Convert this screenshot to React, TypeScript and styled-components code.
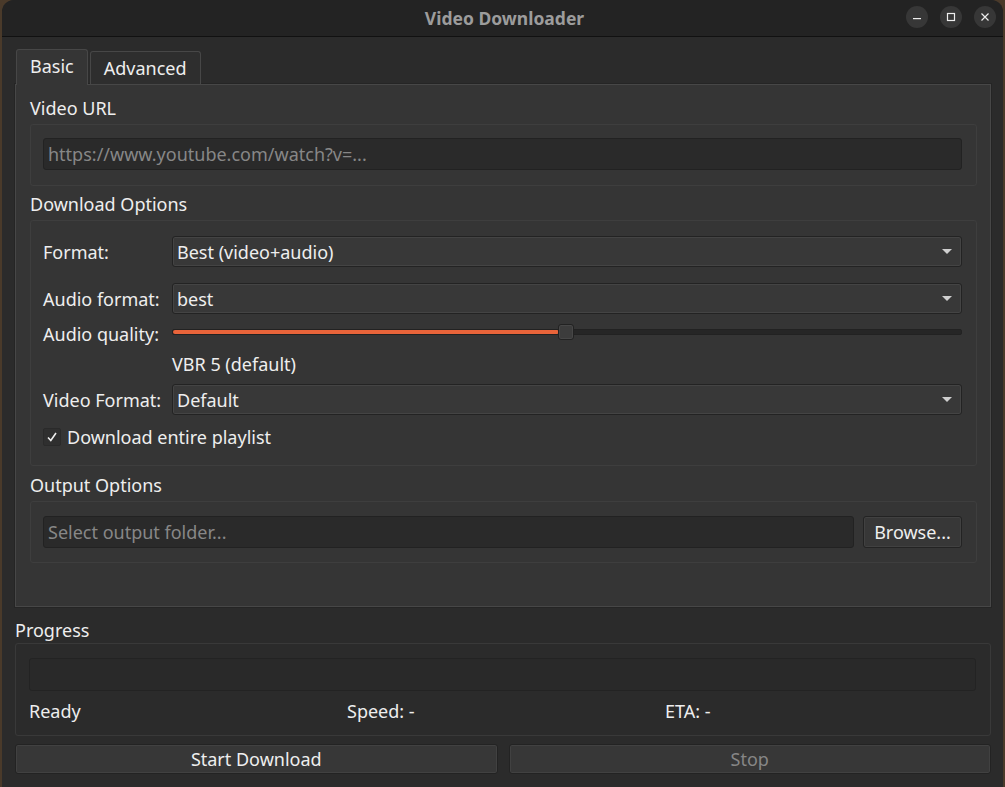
import React from "react";
import styled, { createGlobalStyle } from "styled-components";

const Global = createGlobalStyle`
  html, body { margin: 0; padding: 0; background: #4a3a2a; }
  body { font-family: "Noto Sans", "DejaVu Sans", sans-serif; }
  * { box-sizing: border-box; }
`;

const Window = styled.div`
  width: 1001px;
  height: 787px;
  margin: 0 2px;
  background: #2b2b2b;
  border-top-left-radius: 12px;
  border-top-right-radius: 12px;
  overflow: hidden;
  display: flex;
  flex-direction: column;
  color: #eeeeee;
  font-size: 18px;
`;

const TitleBar = styled.div`
  height: 37px;
  flex: none;
  background: #232323;
  border-bottom: 1px solid #111;
  display: flex;
  align-items: center;
  justify-content: center;
  position: relative;
`;

const Title = styled.div`
  font-weight: bold;
  color: #9c9c9c;
  font-size: 17.5px;
  margin-left: 4px;
`;

const Controls = styled.div`
  position: absolute;
  right: 7px;
  top: 6px;
  display: flex;
  gap: 12px;
`;

const CtrlBtn = styled.div`
  width: 22px;
  height: 22px;
  border-radius: 50%;
  background: #373737;
  display: flex;
  align-items: center;
  justify-content: center;
`;

const Body = styled.div`
  padding: 12px 12px 0 13px;
  display: flex;
  flex-direction: column;
`;

const TabBar = styled.div`
  display: flex;
  align-items: flex-end;
  gap: 2px;
  height: 35px;
  padding-left: 1px;
`;

const Tab = styled.div<{ $active?: boolean }>`
  height: ${(p) => (p.$active ? "36px" : "33px")};
  padding: 0 13px;
  display: flex;
  align-items: center;
  background: ${(p) => (p.$active ? "#353535" : "#2e2e2e")};
  border: 1px solid #474747;
  border-bottom: none;
  border-radius: 3px 3px 0 0;
  margin-bottom: ${(p) => (p.$active ? "-1px" : "0")};
  position: relative;
  z-index: ${(p) => (p.$active ? 1 : 0)};
  color: #eeeeee;
  padding-bottom: ${(p) => (p.$active ? "4px" : "0")};
`;

const Pane = styled.div`
  height: 523px;
  background: #353535;
  border: 1px solid #474747;
  box-shadow: 0 0 0 1px #252525;
  padding: 12px 13px 0 14px;
  display: flex;
  flex-direction: column;
`;

const SectionTitle = styled.div<{ $mt?: number; $mb?: number }>`
  height: 22px;
  line-height: 22px;
  margin-top: ${(p) => p.$mt ?? 0}px;
  margin-bottom: ${(p) => p.$mb ?? 5}px;
`;

const Group = styled.div<{ $h: number; $pt: number }>`
  height: ${(p) => p.$h}px;
  border: 1px solid #3e3e3e;
  border-radius: 3px;
  padding: ${(p) => p.$pt}px 14px 0 12px;
  display: flex;
  flex-direction: column;
`;

const TextInput = styled.div<{ $placeholder?: boolean }>`
  height: 32px;
  flex: none;
  background: #2a2a2a;
  border: 1px solid #222;
  border-radius: 3px;
  display: flex;
  align-items: center;
  padding-left: 4px;
  color: ${(p) => (p.$placeholder ? "#878787" : "#eee")};
`;

const GrowInput = styled(TextInput)`
  flex: 1;
`;

const FormRow = styled.div<{ $mt?: number; $h?: number }>`
  display: grid;
  grid-template-columns: 129px 1fr;
  align-items: center;
  margin-top: ${(p) => p.$mt ?? 0}px;
  height: ${(p) => p.$h ?? 31}px;
`;

const Combo = styled.div`
  height: 31px;
  background: #383838;
  border: 1px solid #232323;
  box-shadow: inset 0 0 0 1px #444;
  border-radius: 3px;
  display: flex;
  align-items: center;
  justify-content: space-between;
  padding: 0 9px 0 4px;
`;

const Arrow = styled.div`
  width: 0;
  height: 0;
  border-left: 5px solid transparent;
  border-right: 5px solid transparent;
  border-top: 5px solid #cfcfcf;
`;

const SliderTrack = styled.div`
  position: relative;
  height: 6px;
  margin-bottom: 5px;
  background: #262626;
  border: 1px solid #222;
  border-radius: 2px;
`;

const SliderFill = styled.div`
  position: absolute;
  left: 0;
  top: 0;
  bottom: 0;
  background: #e9643a;
  border-radius: 2px;
`;

const SliderHandle = styled.div`
  position: absolute;
  top: -6px;
  width: 16px;
  height: 16px;
  background: #3c3c3c;
  border: 1px solid #222;
  border-radius: 3px;
  box-shadow: inset 0 0 0 1px #474747;
`;

const CheckRow = styled.div`
  display: flex;
  align-items: center;
  gap: 6px;
  margin-top: 11px;
  height: 22px;
`;

const CheckBox = styled.div`
  width: 18px;
  height: 18px;
  background: #2f2f2f;
  border: 1px solid #2a2a2a;
  border-radius: 2px;
  display: flex;
  align-items: center;
  justify-content: center;
`;

const InputRow = styled.div`
  display: flex;
  gap: 9px;
`;

const Button = styled.div<{ $disabled?: boolean; $w?: number }>`
  height: 100%;
  background: #373737;
  border: 1px solid #232323;
  box-shadow: inset 0 0 0 1px #414141;
  border-radius: 3px;
  display: flex;
  align-items: center;
  justify-content: center;
  color: ${(p) => (p.$disabled ? "#868686" : "#eeeeee")};
  ${(p) => (p.$w ? `width: ${p.$w}px;` : "flex: 1;")}
`;

const ProgressGroup = styled.div`
  height: 93px;
  border: 1px solid #393939;
  border-radius: 3px;
  padding: 14px 14px 0 13px;
  display: flex;
  flex-direction: column;
`;

const ProgressBar = styled.div`
  height: 33px;
  background: #292929;
  border: 1px solid #232323;
  border-radius: 3px;
`;

const StatusRow = styled.div`
  display: grid;
  grid-template-columns: 318px 318px 1fr;
  height: 40px;
  align-items: center;
`;

const ButtonRow = styled.div`
  display: flex;
  gap: 11px;
  margin-top: 8px;
  height: 30px;
`;

export default function App() {
  return (
    <>
      <Global />
      <Window>
        <TitleBar>
          <Title>Video Downloader</Title>
          <Controls>
            <CtrlBtn>
              <svg width="10" height="10" viewBox="0 0 10 10">
                <rect x="1" y="6" width="8" height="1.2" fill="#eee" />
              </svg>
            </CtrlBtn>
            <CtrlBtn>
              <svg width="10" height="10" viewBox="0 0 10 10">
                <rect x="1.5" y="1.5" width="7" height="7" fill="none" stroke="#eee" strokeWidth="1.2" />
              </svg>
            </CtrlBtn>
            <CtrlBtn>
              <svg width="10" height="10" viewBox="0 0 10 10">
                <path d="M1.5 1.5 L8.5 8.5 M8.5 1.5 L1.5 8.5" stroke="#eee" strokeWidth="1.2" />
              </svg>
            </CtrlBtn>
          </Controls>
        </TitleBar>
        <Body>
          <TabBar>
            <Tab $active>Basic</Tab>
            <Tab>Advanced</Tab>
          </TabBar>
          <Pane>
            <SectionTitle>Video URL</SectionTitle>
            <Group $h={62} $pt={13}>
              <TextInput $placeholder>https://www.youtube.com/watch?v=...</TextInput>
            </Group>
            <SectionTitle $mt={7}>Download Options</SectionTitle>
            <Group $h={246} $pt={15}>
              <FormRow>
                <span>Format:</span>
                <Combo>
                  <span>Best (video+audio)</span>
                  <Arrow />
                </Combo>
              </FormRow>
              <FormRow $mt={16}>
                <span>Audio format:</span>
                <Combo>
                  <span>best</span>
                  <Arrow />
                </Combo>
              </FormRow>
              <FormRow $mt={8} $h={24}>
                <span>Audio quality:</span>
                <SliderTrack>
                  <SliderFill style={{ width: "49%" }} />
                  <SliderHandle style={{ left: "calc(49% - 1px)" }} />
                </SliderTrack>
              </FormRow>
              <FormRow $mt={6} $h={24}>
                <span />
                <span>VBR 5 (default)</span>
              </FormRow>
              <FormRow $mt={8}>
                <span>Video Format:</span>
                <Combo>
                  <span>Default</span>
                  <Arrow />
                </Combo>
              </FormRow>
              <CheckRow>
                <CheckBox>
                  <svg width="12" height="12" viewBox="0 0 12 12">
                    <path d="M2 6.5 L4.8 9.5 L10 2" fill="none" stroke="#eee" strokeWidth="1.6" />
                  </svg>
                </CheckBox>
                <span>Download entire playlist</span>
              </CheckRow>
            </Group>
            <SectionTitle $mt={8}>Output Options</SectionTitle>
            <Group $h={62} $pt={14}>
              <InputRow>
                <GrowInput $placeholder>Select output folder...</GrowInput>
                <Button $w={99}>Browse...</Button>
              </InputRow>
            </Group>
          </Pane>
          <SectionTitle $mt={12} $mb={2}>Progress</SectionTitle>
          <ProgressGroup>
            <ProgressBar />
            <StatusRow>
              <span>Ready</span>
              <span>Speed: -</span>
              <span>ETA: -</span>
            </StatusRow>
          </ProgressGroup>
          <ButtonRow>
            <Button>Start Download</Button>
            <Button $disabled>Stop</Button>
          </ButtonRow>
        </Body>
      </Window>
    </>
  );
}
